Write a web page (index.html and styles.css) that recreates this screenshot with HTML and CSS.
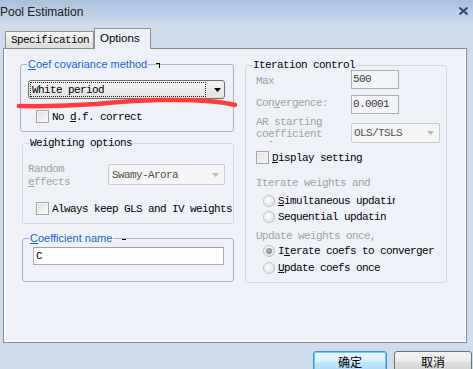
FILE: index.html
```html
<!DOCTYPE html>
<html lang="en">
<head>
    <meta charset="UTF-8">
    <title>Pool Estimation</title>
    <link rel="stylesheet" href="styles.css">
</head>
<body>
<div class="titlebar">
    <span class="title">Pool Estimation</span>
    <svg class="close" width="9" height="8" viewBox="0 0 9 8"><path d="M0.5 0.5 L8.5 7.5 M8.5 0.5 L0.5 7.5" stroke="#3a4a68" stroke-width="2"/></svg>
</div>

<div class="tabs">
    <div class="tab">Specification</div>
    <div class="tab tab-active">Options</div>
</div>

<div class="panel">
    <div class="columns">
        <div class="col-left">
            <div class="group group-cov">
                <div class="legend-row">
                    <span class="legend legend-blue"><u>C</u>oef covariance method</span>
                    <span class="mark-hook"></span>
                </div>
                <div class="combo">
                    <span class="combo-text">White period</span>
                    <span class="combo-arrow"><svg width="7" height="4" viewBox="0 0 7 4"><polygon points="0,0 7,0 3.5,4" fill="#000"/></svg></span>
                </div>
                <div class="check-row check-df">
                    <span class="checkbox"></span>
                    <span class="mono">No <u>d</u>.f. correct</span>
                </div>
            </div>

            <div class="group group-weight">
                <div class="legend-row">
                    <span class="legend mono">Weighting options</span>
                </div>
                <div class="field-row">
                    <span class="mono gray re-label">Random <u>e</u>ffects</span>
                    <div class="select select-swamy">
                        <span class="select-text">Swamy-Arora</span>
                        <svg width="7" height="4" viewBox="0 0 7 4"><polygon points="0,0 7,0 3.5,4" fill="#b5b5b5"/></svg>
                    </div>
                </div>
                <div class="check-row check-keep">
                    <span class="checkbox"></span>
                    <span class="mono">Always keep GLS and IV weights</span>
                </div>
            </div>

            <div class="group group-name">
                <div class="legend-row">
                    <span class="legend legend-blue"><u>C</u>oefficient name</span>
                    <span class="mark-dash"></span>
                </div>
                <div class="textbox">C</div>
            </div>
        </div>

        <div class="col-right">
            <div class="group group-iter">
                <div class="legend-row">
                    <span class="legend mono">Iteration control</span>
                </div>
                <div class="iter-row row-max">
                    <span class="mono gray iter-label lbl-max">Max</span>
                    <div class="textbox-dis">500</div>
                </div>
                <div class="iter-row row-conv">
                    <span class="mono gray iter-label lbl-conv">Con<u>v</u>ergence:</span>
                    <div class="textbox-dis">0.0001</div>
                </div>
                <div class="iter-row row-ar">
                    <span class="mono gray iter-label lbl-ar">AR starting coefficient value</span>
                    <div class="select select-ols">
                        <span class="select-text">OLS/TSLS</span>
                        <svg width="7" height="4" viewBox="0 0 7 4"><polygon points="0,0 7,0 3.5,4" fill="#b5b5b5"/></svg>
                    </div>
                </div>
                <div class="check-row check-display">
                    <span class="checkbox"></span>
                    <span class="mono"><u>D</u>isplay setting</span>
                </div>
                <div class="mono gray iter-note note-weights">Iterate weights and</div>
                <div class="radio-row radio-first">
                    <span class="radio"></span>
                    <span class="mono radio-text clip"><u>S</u>imultaneous updating</span>
                </div>
                <div class="radio-row radio-second">
                    <span class="radio"></span>
                    <span class="mono radio-text">Sequential updatin</span>
                </div>
                <div class="mono gray iter-note note-once">Update weights once,</div>
                <div class="radio-row radio-third">
                    <span class="radio radio-on"></span>
                    <span class="mono radio-text">I<u>t</u>erate coefs to converger</span>
                </div>
                <div class="radio-row radio-fourth">
                    <span class="radio"></span>
                    <span class="mono radio-text"><u>U</u>pdate coefs once</span>
                </div>
            </div>
        </div>
    </div>

    <svg class="scribble" width="464" height="295" viewBox="3 48 464 295">
        <path d="M18 105 C45 105.5 75 104.5 95 103 C115 101 130 99.5 160 99 C190 98.5 215 99 234 104" fill="none" stroke="#ff3b3b" stroke-width="4.5" stroke-linecap="round"/>
    </svg>
</div>

<div class="buttons">
    <div class="btn btn-default">确定</div>
    <div class="btn btn-cancel">取消</div>
</div>
</body>
</html>
```

FILE: styles.css
```css
* {
    box-sizing: border-box;
}
html, body {
    margin: 0;
    width: 473px;
    height: 369px;
    overflow: hidden;
}
body {
    background: #cfdcec;
    font-family: "Liberation Sans", Arial, sans-serif;
    font-size: 12px;
    color: #000;
}
.mono {
    font-family: "Liberation Mono", "Courier New", monospace;
    font-size: 11px;
    letter-spacing: -0.6px;
}
.gray {
    color: #a2a2a2;
}
u {
    text-underline-offset: 1px;
}

/* title bar */
.titlebar {
    height: 22px;
    background: linear-gradient(#a9c1de, #c8d8ec);
    display: flex;
    align-items: center;
    justify-content: space-between;
    padding-right: 5px;
}
.title {
    color: #1b1b1b;
    padding-top: 1px;
}

/* tabs */
.tabs {
    display: flex;
    align-items: flex-end;
    height: 26px;
    padding-left: 5px;
}
.tab {
    width: 89px;
    height: 17px;
    border: 1px solid #8e9097;
    border-bottom: none;
    background: linear-gradient(#f6f6f6, #dcdcdc);
    padding-left: 5px;
    line-height: 16px;
    font-family: "Liberation Mono", "Courier New", monospace;
    font-size: 11px;
    letter-spacing: -0.6px;
}
.tab-active {
    width: 57px;
    height: 21px;
    margin-bottom: -1px;
    background: #eef2f8;
    position: relative;
    z-index: 1;
    font-family: "Liberation Sans", Arial, sans-serif;
    font-size: 11.5px;
    letter-spacing: 0;
    line-height: 19px;
}

/* panel */
.panel {
    position: relative;
    margin-left: 3px;
    width: 464px;
    height: 295px;
    border: 1px solid #898c94;
    background: #eef2f8;
    box-shadow: inset 2px 0 #fbfcfd, inset 0 -2px #fbfcfd, inset -1px 0 #fbfcfd;
    padding: 15px 0 0 16px;
}
.columns {
    display: flex;
    gap: 11px;
}
.col-left {
    width: 214px;
}
.col-right {
    width: 202px;
    padding-top: 1px;
}

/* group boxes */
.group {
    border: 1px solid #d2d8e1;
    border-radius: 3px;
}
.group-cov {
    height: 68px;
    border-color: #a6b1c3;
}
.group-weight {
    height: 81px;
    margin: 11px 0 0 2px;
}
.group-name {
    height: 44px;
    margin: 14px 0 0 2px;
    border-color: #a6b1c3;
}
.group-iter {
    height: 218px;
}
.legend-row {
    display: flex;
    align-items: center;
    height: 14px;
    margin: -8px 0 -6px 6px;
}
.legend {
    background: #eef2f8;
    padding: 0 1px;
    line-height: 14px;
    white-space: nowrap;
}
.legend-blue {
    color: #1c5fd6;
    font-size: 11px;
}
.mark-hook {
    width: 4px;
    height: 5px;
    margin: 3px 0 0 8px;
    border-top: 1px solid #000;
    border-right: 1px solid #000;
}
.mark-dash {
    width: 4px;
    height: 1px;
    margin: 3px 0 0 9px;
    background: #000;
}

/* combo boxes */
.combo {
    display: flex;
    margin: 15px 0 0 7px;
    width: 197px;
    height: 19px;
    padding: 1px;
    border: 1px solid #707070;
    border-radius: 3px;
    background: linear-gradient(#f4f4f4, #e1e1e1);
}
.combo-text {
    width: 176px;
    border: 1px dotted #222;
    padding-left: 1px;
    line-height: 15px;
    font-family: "Liberation Mono", "Courier New", monospace;
    font-size: 11px;
    letter-spacing: -0.6px;
}
.combo-arrow {
    flex: 1;
    display: flex;
    align-items: center;
    justify-content: center;
    padding-left: 5px;
}
.select {
    display: flex;
    align-items: center;
    justify-content: space-between;
    height: 21px;
    border: 1px solid #c7cad0;
    border-radius: 2px;
    background: #f4f4f4;
    padding: 0 5px 0 2px;
    color: #505050;
    font-family: "Liberation Mono", "Courier New", monospace;
    font-size: 11px;
    letter-spacing: -0.6px;
}
.select-swamy {
    width: 117px;
    margin-top: 1px;
    padding-left: 3px;
}
.select-ols {
    width: 89px;
    height: 20px;
    margin-top: 7px;
}

/* text boxes */
.textbox {
    margin: 8px 0 0 10px;
    width: 191px;
    height: 18px;
    border: 1px solid #abadb3;
    border-top-color: #9aa0aa;
    background: #fff;
    padding-left: 2px;
    line-height: 16px;
    font-family: "Liberation Mono", "Courier New", monospace;
    font-size: 11px;
}
.textbox-dis {
    width: 48px;
    height: 19px;
    border: 1px solid #aab0b9;
    background: #f3f5f9;
    padding-left: 1px;
    line-height: 17px;
    color: #3a3a3a;
    font-family: "Liberation Mono", "Courier New", monospace;
    font-size: 11px;
    letter-spacing: -0.6px;
}

/* checkboxes and radios */
.check-row, .radio-row {
    display: flex;
    align-items: center;
    height: 13px;
    white-space: nowrap;
}
.checkbox {
    width: 13px;
    height: 13px;
    margin-right: 3px;
    border: 1px solid #a4a4a4;
    background: linear-gradient(135deg, #dedede, #fbfbfb);
    box-shadow: inset 0 0 0 1px #f4f4f4;
}
.check-df {
    margin: 11px 0 0 15px;
}
.check-keep {
    margin: 13px 0 0 13px;
}
.check-display {
    margin: 8px 0 0 10px;
}
.radio {
    width: 12px;
    height: 12px;
    margin-right: 3px;
    border: 1px solid #c0c0c0;
    border-radius: 50%;
    background: radial-gradient(circle at 40% 40%, #fdfdfd, #dcdcdc);
    display: flex;
    align-items: center;
    justify-content: center;
}
.radio-on::after {
    content: "";
    width: 6px;
    height: 6px;
    border-radius: 50%;
    background: radial-gradient(circle at 40% 40%, #b0b0b0, #7a7a7a);
}
.radio-text {
    overflow: hidden;
}
.clip {
    width: 117px;
}
.radio-row {
    margin-left: 17px;
}
.radio-first {
    margin-top: 4px;
}
.radio-second {
    margin-top: 3px;
}
.radio-third {
    margin-top: 1px;
}
.radio-fourth {
    margin-top: 4px;
}

/* left weighting row */
.field-row {
    display: flex;
    margin: 19px 0 0 5px;
}
.re-label {
    width: 80px;
    line-height: 13px;
}

/* iteration control */
.iter-row {
    display: flex;
    margin-left: 10px;
}
.iter-label {
    width: 95px;
    line-height: 13px;
}
.row-max {
    margin-top: 4px;
}
.lbl-max {
    padding-top: 5px;
}
.row-conv {
    margin-top: 6px;
}
.lbl-conv {
    padding-top: 2px;
}
.row-ar {
    margin-top: 2px;
}
.lbl-ar {
    width: 95px;
    padding-right: 15px;
    height: 26px;
    line-height: 12px;
    overflow: hidden;
}
.iter-note {
    margin-left: 10px;
    line-height: 13px;
    white-space: nowrap;
}
.note-weights {
    margin-top: 13px;
}
.note-once {
    margin-top: 7px;
}

/* annotation */
.scribble {
    position: absolute;
    left: 0;
    top: 0;
    pointer-events: none;
}

/* buttons */
.buttons {
    display: flex;
    justify-content: flex-end;
    gap: 7px;
    padding-right: 1px;
    margin-top: 8px;
}
.btn {
    height: 23px;
    border: 1px solid #707070;
    border-radius: 3px;
    text-align: center;
    padding-top: 1px;
    line-height: 17px;
    font-family: "Noto Sans CJK SC", sans-serif;
    font-size: 12px;
}
.btn-default {
    width: 74px;
    border-color: #3c8fcf;
    background: linear-gradient(#eaf6fd, #d9f0fc 45%, #bee6fd 50%, #a7d9f5);
    box-shadow: inset 0 0 0 1px #68d0f5;
}
.btn-cancel {
    width: 78px;
    background: linear-gradient(#f2f2f2, #ebebeb 45%, #dddddd 50%, #cfcfcf);
}
```
